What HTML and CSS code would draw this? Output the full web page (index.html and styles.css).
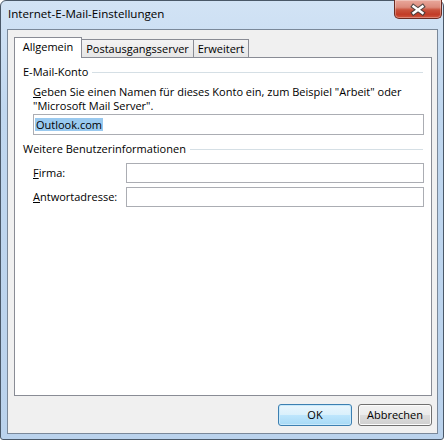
FILE: index.html
```html
<!DOCTYPE html>
<html lang="de">
<head>
<meta charset="utf-8">
<title>Internet-E-Mail-Einstellungen</title>
<link rel="stylesheet" href="styles.css">
</head>
<body>
<div class="window">
  <div class="titlebar">
    <span class="title">Internet-E-Mail-Einstellungen</span>
    <div class="close" aria-label="Schließen">
      <svg width="48" height="19" viewBox="0 0 48 19">
        <path d="M19.5 6.5 L28.5 13 M28.5 6.5 L19.5 13" stroke="#3c3c3c" stroke-width="4.6" stroke-linecap="square" fill="none" opacity="0.85"/>
        <path d="M19.5 6.5 L28.5 13 M28.5 6.5 L19.5 13" stroke="#ffffff" stroke-width="2.4" stroke-linecap="square" fill="none"/>
      </svg>
    </div>
  </div>
  <div class="client">
    <div class="tabs">
      <div class="tab tab-general active">Allgemein</div>
      <div class="tab tab-outgoing">Postausgangsserver</div>
      <div class="tab tab-advanced">Erweitert</div>
    </div>
    <div class="panel">
      <div class="group">E-Mail-Konto</div>
      <p class="desc"><u>G</u>eben Sie einen Namen für dieses Konto ein, zum Beispiel "Arbeit" oder<br>"Microsoft Mail Server".</p>
      <div class="field field-wide"><span class="sel">Outlook.com</span></div>
      <div class="group">Weitere Benutzerinformationen</div>
      <div class="row row-first"><span class="label"><u>F</u>irma:</span><div class="field"></div></div>
      <div class="row"><span class="label"><u>A</u>ntwortadresse:</span><div class="field"></div></div>
    </div>
    <div class="buttons">
      <div class="btn btn-default">OK</div>
      <div class="btn">Abbrechen</div>
    </div>
  </div>
</div>
</body>
</html>
```
FILE: styles.css
```css
* { box-sizing: border-box; }
html, body { margin: 0; padding: 0; background: #fff; }
body { font-family: "Open Sans", sans-serif; font-size: 11px; line-height: 14px; color: #000; }

.window {
  width: 444px; height: 440px;
  border: 1px solid #4a5868;
  border-radius: 6px 6px 3px 3px;
  background: linear-gradient(#d2e3f5, #c0d7ef 25%, #bad2ec);
  padding: 0 5px 5px 6px;
  display: flex; flex-direction: column;
}
.titlebar {
  height: 28px; margin: 0 -5px 0 -6px; padding: 6px 0 0 7px;
  display: flex; align-items: flex-start;
}
.title { font-size: 11.6px; color: #000; }
.close {
  margin-left: auto; margin-right: 1px; margin-top: -7px;
  width: 48px; height: 19px;
  border: 1px solid #6b2b22; border-top: none;
  border-radius: 0 0 5px 5px;
  background: linear-gradient(#e9a89c, #dc8b7c 40%, #c9523c 55%, #c23c27 80%, #d0563f);
  box-shadow: inset 0 0 0 1px rgba(255,255,255,.3);
}
.close svg { display: block; margin: 0 0 0 -1px; }

.client {
  flex: 1;
  border: 1px solid #7a8899;
  background: #f0f0f0;
  padding: 7px 5px 0 6px;
  display: flex; flex-direction: column;
}
.tabs { display: flex; align-items: flex-end; height: 20px; }
.tab {
  height: 18px; margin-left: -1px;
  border: 1px solid #898c95; border-bottom: none;
  background: linear-gradient(#f3f3f3, #e6e6e6);
  text-align: center; line-height: 17px;
}
.tab.active {
  height: 21px; margin-left: 0; margin-bottom: -1px;
  background: #fff; position: relative; z-index: 1;
  line-height: 18px;
}
.tab-general { width: 68px; }
.tab-outgoing { width: 113px; }
.tab-advanced { width: 56px; }

.panel {
  flex: 1;
  border: 1px solid #898c95;
  background: #fff;
  padding: 0 7px 0 8px;
}
.group { display: flex; align-items: center; margin-top: 7px; }
.group::after { content: ""; flex: 1; height: 1px; background: #d5dfe5; margin: 1px 1px 0 4px; }
.desc { margin: 6px 0 0 10px; }
.field {
  height: 20px; border: 1px solid #abadb3; background: #fff;
  display: flex; align-items: center; padding-left: 1px; flex: 1;
}
.field-wide { height: 21px; margin: 1px 0 0 10px; flex: none; }
.sel { background: #99c9ef; line-height: 13px; padding: 0 1px; }
.row { display: flex; align-items: center; margin-top: 4px; padding-left: 10px; }
.row-first { margin-top: 7px; }
.label { width: 93px; }

.buttons { display: flex; justify-content: flex-end; gap: 6px; margin: 8px 0 7px; }
.btn {
  width: 74px; height: 22px; border: 1px solid #707070; border-radius: 3px;
  background: linear-gradient(#f2f2f2, #ebebeb 50%, #dddddd 50%, #cfcfcf);
  box-shadow: inset 0 0 0 1px #fcfcfc;
  text-align: center; line-height: 20px;
}
.btn-default {
  border-color: #3c7fb1;
  background: linear-gradient(#eaf6fd, #d9f0fc 50%, #bee6fd 50%, #a7d9f5);
  box-shadow: inset 0 0 0 1px #c8e9fb;
}
```
